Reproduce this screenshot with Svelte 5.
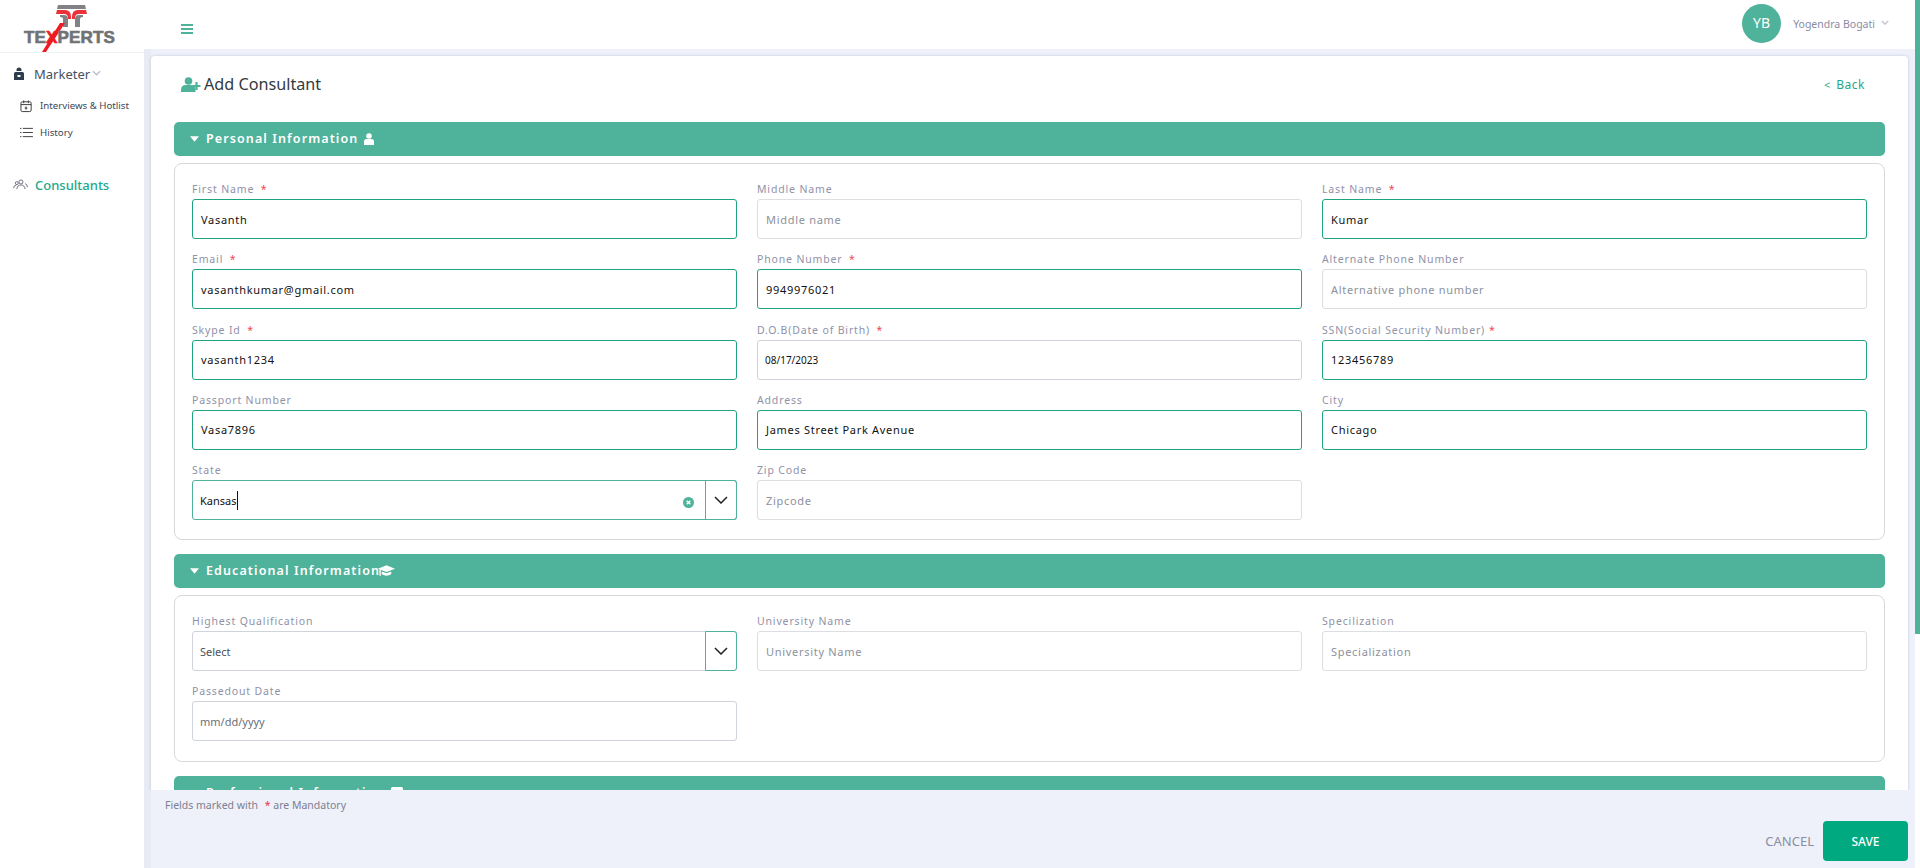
<script>
  const personal = [
    { label: 'First Name', req: true, value: 'Vasanth', ph: '' },
    { label: 'Middle Name', value: '', ph: 'Middle name' },
    { label: 'Last Name', req: true, value: 'Kumar', ph: '' },
    { label: 'Email', req: true, value: 'vasanthkumar@gmail.com' },
    { label: 'Phone Number', req: true, value: '9949976021' },
    { label: 'Alternate Phone Number', value: '', ph: 'Alternative phone number' },
    { label: 'Skype Id', req: true, value: 'vasanth1234' },
    { label: 'D.O.B(Date of Birth)', req: true, value: '08/17/2023', date: true },
    { label: 'SSN(Social Security Number)', req: true, value: '123456789', tight: true },
    { label: 'Passport Number', value: 'Vasa7896' },
    { label: 'Address', value: 'James Street Park Avenue' },
    { label: 'City', value: 'Chicago' }
  ];
</script>

{#snippet chevron()}
  <svg class="chev" viewBox="0 0 14 8" width="14" height="8"><path d="M1 1l6 6 6-6" fill="none" stroke="#222" stroke-width="1.5"/></svg>
{/snippet}

{#snippet caret()}
  <svg class="caret" viewBox="0 0 10 6" width="9" height="6"><path d="M0 0h10L5 6z" fill="#fff"/></svg>
{/snippet}

{#snippet lab(text, req, tight)}
  <div class="label">{text}{#if req}<span class="star" class:tight>*</span>{/if}</div>
{/snippet}

<div class="app">
  <aside class="side">
    <div class="logo">
      <svg class="logo-mark" viewBox="0 0 130 60" width="130" height="60">
        <path d="M58 5h27l1 4H57z" fill="#808285"/>
        <path d="M57 10h8q6 0 6 7v2h-3v-1q0-4-4-4h-8zM86 10h-8q-6 0-6 7v2h3v-1q0-4 4-4h8z" fill="#ed2f3a"/>
        <path d="M60 15h4q4 0 4 4v8h-5v-8q0-2-3-2zM83 15h-4q-4 0-4 4v8h5v-8q0-2 3-2z" fill="#808285"/>
        <path d="M60 23l-18 29h4l19-29z" fill="#ed1c24"/>
      </svg>
      <div class="logo-text">TE<span>X</span>PERTS</div>
    </div>
    <div class="role">
      <svg class="role-ic" viewBox="0 0 12 14" width="12" height="14"><path d="M3.500 3a2.500 2.500 0 015 0v1h-5zM1 6.500Q1 5 2.500 5h7Q11 5 11 6.500V13H1z" fill="#2f3e4e"/><path d="M4.500 8h3v2h-3z" fill="#fff"/></svg>
      <span>Marketer</span>
      <svg viewBox="0 0 10 6" width="9" height="6"><path d="M1 1l4 4 4-4" fill="none" stroke="#b8bfcc" stroke-width="1.500"/></svg>
    </div>
    <div class="subs">
      <div class="sub">
        <svg viewBox="0 0 14 14" width="13" height="14"><rect x="1" y="2.500" width="11" height="10.500" rx="1.500" fill="none" stroke="#333" stroke-width="1"/><path d="M1 5.500h11M4 1v3M9 1v3M6.500 7.500v3.500M5 9.200h3" fill="none" stroke="#333"/></svg>
        <span>Interviews &amp; Hotlist</span>
      </div>
      <div class="sub">
        <svg viewBox="0 0 14 12" width="13" height="11"><path d="M3 1.500h11M3 6h11M3 10.500h11M0 1.500h1.500M0 6h1.500M0 10.500h1.500" stroke="#333" fill="none"/></svg>
        <span>History</span>
      </div>
    </div>
    <div class="consult">
      <svg viewBox="0 0 16 12" width="15" height="11"><circle cx="8.500" cy="3.200" r="2.200" fill="none" stroke="#667"/><circle cx="4" cy="4.500" r="1.600" fill="none" stroke="#667"/><path d="M4 11q.5-4.500 4.500-4.500T13 11M.5 10q0-3 3-3.500M13 5q2.500.5 2.500 4" fill="none" stroke="#667"/></svg>
      <span>Consultants</span>
    </div>
  </aside>

  <div class="right">
    <header class="top">
      <div class="burger"><i></i><i></i><i></i></div>
      <div class="user">
        <div class="avatar">YB</div>
        <span class="uname">Yogendra Bogati</span>
        <svg viewBox="0 0 10 6" width="8" height="5"><path d="M1 1l4 4 4-4" fill="none" stroke="#c3c8d6" stroke-width="1.800"/></svg>
      </div>
    </header>

    <div class="content">
      <main class="card">
        <div class="title-row">
          <h1>
            <svg viewBox="0 0 20 15" width="20" height="15"><circle cx="7.500" cy="4" r="3.800" fill="#4fb29a"/><path d="M0 15v-2q0-5 5-5h5q4 0 4.500 3.500V15z" fill="#4fb29a"/><path d="M15.500 5v8M11.500 9h8" stroke="#4fb29a" stroke-width="2.200"/></svg>
            <span>Add Consultant</span>
          </h1>
          <a class="back" href="#back"><span class="lt">&lt;</span> Back</a>
        </div>

        <section class="bar">
          {@render caret()}
          <span>Personal Information</span>
          <svg class="bar-ic" viewBox="0 0 10 12" width="10" height="12"><circle cx="5" cy="3" r="2.800" fill="#fff"/><path d="M0 12V8.500Q0 6 2.500 6h5Q10 6 10 8.500V12z" fill="#fff"/></svg>
        </section>
        <div class="panel">
          <div class="grid">
            {#each personal as f}
              <div class="field">
                {@render lab(f.label, f.req, f.tight)}
                <div class="input" class:filled={f.value && !f.date} class:date={f.date}>
                  {#if f.value}<span class="val">{f.value}</span>{:else}<span class="ph">{f.ph}</span>{/if}
                </div>
              </div>
            {/each}
            <div class="field">
              {@render lab('State')}
              <div class="combo on">
                <div class="combo-text"><span class="kansas">Kansas</span><i class="cursor"></i>
                  <svg class="clear" viewBox="0 0 12 12" width="11" height="11"><circle cx="6" cy="6" r="6" fill="#4fb29a"/><path d="M4 4l4 4M8 4l-4 4" stroke="#fff" stroke-width="1.500"/></svg>
                </div>
                <div class="combo-btn">{@render chevron()}</div>
              </div>
            </div>
            <div class="field">
              {@render lab('Zip Code')}
              <div class="input"><span class="ph">Zipcode</span></div>
            </div>
          </div>
        </div>

        <section class="bar">
          {@render caret()}
          <span>Educational Information</span>
          <svg class="cap" viewBox="0 0 18 12" width="17" height="12"><path d="M9 0l9 3.500-9 3.500-9-3.500z" fill="#fff"/><path d="M4 6.500v3q5 3 10 0v-3L9 8.500zM1.500 4v7h1.500V4.500z" fill="#fff"/></svg>
        </section>
        <div class="panel edu">
          <div class="grid">
            <div class="field">
              {@render lab('Highest Qualification')}
              <div class="combo">
                <div class="combo-text"><span class="sel">Select</span></div>
                <div class="combo-btn">{@render chevron()}</div>
              </div>
            </div>
            <div class="field">
              {@render lab('University Name')}
              <div class="input"><span class="ph">University Name</span></div>
            </div>
            <div class="field">
              {@render lab('Specilization')}
              <div class="input"><span class="ph">Specialization</span></div>
            </div>
            <div class="field">
              {@render lab('Passedout Date')}
              <div class="input date"><span class="sel mm">mm/dd/yyyy</span></div>
            </div>
          </div>
        </div>

        <section class="bar">
          {@render caret()}
          <span>Professional Information</span>
          <svg class="bar-ic" viewBox="0 0 12 12" width="12" height="12"><rect width="12" height="12" rx="1.500" fill="#fff"/></svg>
        </section>
      </main>
    </div>

    <footer class="foot">
      <div class="note">Fields marked with <span class="star2">*</span> are Mandatory</div>
      <div class="actions">
        <button class="cancel">CANCEL</button>
        <button class="save">SAVE</button>
      </div>
    </footer>
  </div>
  <div class="thumb"></div>
</div>

<style>
  :global(body) { margin: 0; background: #fff; }
  .app {
    position: relative;
    display: grid;
    grid-template-columns: 144px 1fr;
    width: 1920px;
    height: 868px;
    overflow: hidden;
    font-family: "Noto Sans", "Open Sans", sans-serif;
    color: #333;
  }
  .side { background: #fff; }
  .logo {
    position: relative;
    height: 53px;
    border-bottom: 1px solid #f1f2f5;
    box-sizing: border-box;
  }
  .logo-mark { position: absolute; left: 0; top: 0; }
  .logo-text {
    position: absolute;
    left: 24px;
    top: 28px;
    font: 900 17.100px/20px "Liberation Sans", sans-serif;
    -webkit-text-stroke: 0.600px #707275;
    color: #707275;
    letter-spacing: 0.100px;
    white-space: nowrap;
  }
  .logo-text span { color: #ed1c24; -webkit-text-stroke: 0.600px #ed1c24; }
  .role {
    display: flex;
    align-items: center;
    height: 42px;
    padding: 0 0 0 13px;
    font-size: 13px;
    color: #46505f;
  }
  .role-ic { margin-right: 9px; }
  .role svg:last-child { margin: -3px 0 0 2px; }
  .subs { margin-top: -3px; }
  .sub {
    display: flex;
    align-items: center;
    height: 27px;
    padding-left: 20px;
    gap: 7px;
    font-size: 9.700px;
    color: #3d4654;
  }
  .consult {
    display: flex;
    align-items: center;
    gap: 7px;
    margin-top: 25px;
    height: 27px;
    padding-left: 13px;
    font-size: 13px;
    font-weight: 500;
    color: #1ea88a;
  }
  .right {
    display: flex;
    flex-direction: column;
    min-width: 0;
    height: 868px;
    padding-right: 5px;
    background: #fff;
    box-sizing: border-box;
  }
  .top {
    flex: none;
    display: flex;
    align-items: center;
    justify-content: space-between;
    height: 49px;
    background: #fff;
    padding: 0 26px 0 37px;
  }
  .burger { display: flex; flex-direction: column; gap: 2px; margin-top: 9px; }
  .burger i { display: block; width: 12px; height: 2px; background: #4fb29a; }
  .user { display: flex; align-items: center; font-size: 10.500px; color: #8a8ca5; margin-top: -2px; }
  .avatar {
    width: 39px;
    height: 39px;
    border-radius: 50%;
    background: #4fb29a;
    color: #fff;
    font-size: 14px;
    line-height: 37px;
    text-align: center;
    margin-right: 12px;
  }
  .user svg { margin-left: 6px; margin-top: -2px; }
  .uname { white-space: nowrap; }
  .content {
    flex: 1;
    min-height: 0;
    overflow: hidden;
    padding: 7px 7px 0 7px;
    background: #eef1fa;
    box-shadow: inset 7px 0 0 #e8ebf4;
  }
  .card {
    background: #fff;
    border-radius: 4px 4px 0 0;
    padding: 0 23px;
    box-sizing: border-box;
    height: 900px;
    box-shadow: 0 0 3px rgba(120, 130, 160, 0.35);
  }
  .title-row {
    display: flex;
    align-items: center;
    justify-content: space-between;
    height: 66px;
    box-sizing: border-box;
    padding: 0 20px 10px 7px;
  }
  h1 {
    display: flex;
    align-items: center;
    gap: 3px;
    margin: 0;
    font-size: 16.200px;
    font-weight: 400;
    color: #343a40;
  }
  .back { font-size: 12px; color: #1ea88a; text-decoration: none; letter-spacing: 0.500px; }
  .lt { font-size: 11px; margin-right: 2px; }
  .bar {
    display: flex;
    align-items: center;
    height: 34px;
    background: #4fb29a;
    border-radius: 5px;
    padding: 0 0 1px 16px;
    color: #fff;
    font-size: 12.500px;
    font-weight: 600;
    letter-spacing: 1.100px;
    box-sizing: border-box;
  }
  .caret { margin-right: 7px; }
  .bar-ic { margin-left: 6px; }
  .cap { margin-left: -2px; }
  .panel {
    margin: 7px 0 14px;
    border: 1px solid #d6d9dc;
    border-radius: 8px;
    padding: 18px 17px 0;
    height: 377px;
    box-sizing: border-box;
  }
  .panel.edu { height: 167px; }
  .grid {
    display: grid;
    grid-template-columns: 545px 545px 545px;
    column-gap: 20px;
    row-gap: 13.250px;
  }
  .label {
    font-size: 10.500px;
    line-height: 14px;
    height: 17px;
    color: #8f92a8;
    letter-spacing: 0.850px;
    white-space: nowrap;
  }
  .star { color: #f0475a; margin-left: 6.500px; }
  .star.tight { margin-left: 4px; }
  .input, .combo {
    display: flex;
    align-items: center;
    height: 40px;
    box-sizing: border-box;
    border: 1px solid #dcdee2;
    border-radius: 3px;
    padding: 0 8px;
    font-size: 11px;
    letter-spacing: 0.700px;
    background: #fff;
  }
  .input.filled { border-color: #1ea37f; }
  .input.date { border-color: #cfd3da; padding-left: 7px; letter-spacing: 0; font-size: 10px; }
  .input.date .mm { font-size: 11px; }
  .val { color: #111; }
  .ph { color: #8d919c; }
  .combo {
    padding: 0;
    border-color: #cfd4da;
  }
  .combo.on { border-color: #4fb29a; }
  .combo-text {
    flex: 1;
    display: flex;
    align-items: center;
    height: 100%;
    padding-left: 7px;
    font-size: 11px;
    letter-spacing: 0;
    position: relative;
  }
  .kansas { color: #111; }
  .sel { color: #4b5160; }
  .sel.mm { color: #6a6f7a; }
  .cursor { display: block; width: 1.500px; height: 19px; background: #111; }
  .clear { position: absolute; right: 11px; top: 16px; }
  .combo-btn {
    flex: none;
    display: flex;
    align-items: center;
    justify-content: center;
    width: 32px;
    height: 40px;
    box-sizing: border-box;
    margin: -1px -1px -1px 0;
    border: 1px solid #4fb29a;
    border-radius: 0 3px 3px 0;
  }
  .foot {
    flex: none;
    position: relative;
    height: 78px;
    background: #eef1fa;
    box-shadow: inset 7px 0 0 #e8ebf4;
    font-size: 10.500px;
    color: #7d8091;
  }
  .note { padding: 7px 0 0 21px; line-height: 16px; }
  .star2 { color: #f0304a; margin-left: 4px; }
  .actions {
    position: absolute;
    right: 7px;
    bottom: 7px;
    display: flex;
    align-items: center;
    gap: 9px;
  }
  .cancel {
    border: 0;
    background: none;
    padding: 0;
    font: inherit;
    font-size: 13px;
    color: #8a8ea0;
  }
  .save {
    width: 85px;
    height: 40px;
    border: 0;
    border-radius: 4px;
    background: #00a97f;
    color: #fff;
    font: inherit;
    font-size: 12px;
    font-weight: 500;
  }
  .thumb {
    position: absolute;
    right: 0;
    top: 0;
    width: 5px;
    height: 634px;
    background: #4fb29a;
  }
</style>
